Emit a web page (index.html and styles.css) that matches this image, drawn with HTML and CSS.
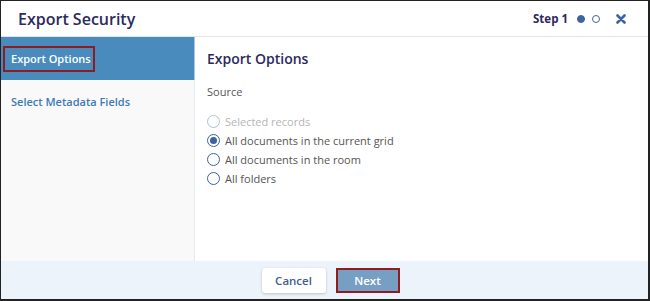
FILE: index.html
```html
<!DOCTYPE html>
<html lang="en">

<head>
    <meta charset="UTF-8">
    <meta name="viewport" content="width=device-width, initial-scale=1.0">
    <title>Export Security</title>
    <link rel="stylesheet" href="styles.css">
</head>

<body>
    <div class="dialog">
        <div class="header">
            <h1 class="title">Export Security</h1>
            <div class="steps">
                <span class="step-label">Step 1</span>
                <span class="dot filled"></span>
                <span class="dot"></span>
                <svg class="close" viewBox="0 0 10 10" width="10" height="10">
                    <path d="M1.5 1.5 L8.5 8.5 M8.5 1.5 L1.5 8.5" />
                </svg>
            </div>
        </div>
        <div class="body">
            <div class="sidebar">
                <div class="nav-item active"><span class="highlight">Export Options</span></div>
                <div class="nav-item">Select Metadata Fields</div>
            </div>
            <div class="main">
                <h2 class="section-title">Export Options</h2>
                <div class="field-label">Source</div>
                <div class="options">
                    <label class="option disabled"><span class="radio"></span>Selected records</label>
                    <label class="option"><span class="radio checked"></span>All documents in the current grid</label>
                    <label class="option"><span class="radio"></span>All documents in the room</label>
                    <label class="option"><span class="radio"></span>All folders</label>
                </div>
            </div>
        </div>
        <div class="footer">
            <button class="btn cancel">Cancel</button>
            <button class="btn next">Next</button>
        </div>
    </div>
</body>

</html>
```

FILE: styles.css
```css
* {
    box-sizing: border-box;
}

body {
    margin: 0;
    font-family: "Open Sans", "Liberation Sans", sans-serif;
}

.dialog {
    width: 650px;
    height: 301px;
    border-style: solid;
    border-color: #222;
    border-width: 1px 2px 2px 1px;
    display: flex;
    flex-direction: column;
    background: #fff;
}

.header {
    height: 36px;
    flex: none;
    display: flex;
    align-items: center;
    justify-content: space-between;
    padding: 0 22px 0 17px;
    border-bottom: 1px solid #e2e6ea;
}

.title {
    margin: 0;
    font-size: 16px;
    font-weight: 600;
    color: #2b2a5c;
}

.steps {
    display: flex;
    align-items: center;
}

.step-label {
    font-size: 11.5px;
    font-weight: 700;
    color: #2b2a5c;
    margin-right: 9px;
}

.dot {
    width: 8px;
    height: 8px;
    border-radius: 50%;
    border: 1px solid #3b64a0;
    margin-right: 7px;
}

.dot.filled {
    background: #3b64a0;
}

.close {
    margin-left: 9px;
    stroke: #3b64a0;
    stroke-width: 2.6;
    stroke-linecap: round;
}

.body {
    flex: 1;
    display: flex;
}

.sidebar {
    width: 194px;
    flex: none;
    background: #f9f9f9;
    border-right: 1px solid #e6e9ee;
}

.nav-item {
    height: 43px;
    display: flex;
    align-items: center;
    padding-left: 10px;
    font-size: 11px;
    font-weight: 600;
    color: #3d7ab5;
}

.nav-item.active {
    background: #4a8bbd;
    color: #fff;
    padding-left: 2px;
    margin-right: -1px;
    border-right: 1px solid #a7c6de;
}

.highlight {
    border: 2px solid #8e1c20;
    padding: 3px 2px 4px 6px;
}

.main {
    flex: 1;
    padding: 12px 12px;
}

.section-title {
    margin: 0 0 16px;
    font-size: 14px;
    font-weight: 600;
    color: #2b2a5c;
}

.field-label {
    font-size: 11px;
    color: #555;
    margin-bottom: 14px;
}

.options {
    display: flex;
    flex-direction: column;
    gap: 2px;
}

.option {
    display: flex;
    align-items: center;
    height: 17px;
    font-size: 11px;
    color: #555;
}

.option.disabled {
    color: #b5b5b5;
}

.radio {
    width: 13px;
    height: 13px;
    border-radius: 50%;
    border: 1px solid #3b64a0;
    margin-right: 5px;
    display: flex;
    align-items: center;
    justify-content: center;
    background: #fff;
}

.option.disabled .radio {
    border-color: #a9bfd8;
}

.radio.checked::after {
    content: "";
    width: 7px;
    height: 7px;
    border-radius: 50%;
    background: #3b64a0;
}

.footer {
    height: 38px;
    flex: none;
    background: #edf3fa;
    display: flex;
    align-items: center;
    justify-content: center;
    gap: 10px;
    padding-left: 12px;
}

.btn {
    width: 64px;
    height: 25px;
    font-family: inherit;
    font-size: 11.5px;
    font-weight: 600;
    border-radius: 3px;
    cursor: pointer;
}

.cancel {
    background: #fff;
    color: #3e5e8e;
    border: none;
    box-shadow: 0 1px 3px rgba(0, 0, 0, 0.2);
}

.next {
    background: #779fc4;
    color: #fff;
    border: 2px solid #8e1c20;
    border-radius: 0;
}
```
